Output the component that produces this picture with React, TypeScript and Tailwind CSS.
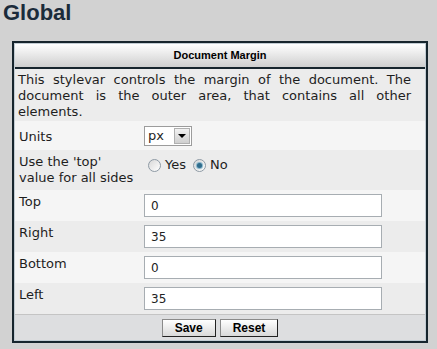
import React from "react";

const ROW_DARK = "bg-[#ececec]";
const ROW_LIGHT = "bg-[#f5f5f5]";

function Radio({ checked }: { checked?: boolean }) {
  return (
    <span className="relative inline-block h-[13px] w-[13px] rounded-full border border-[#8e9aa5] bg-gradient-to-br from-[#d8d8d8] to-white">
      {checked && (
        <span className="absolute left-[3px] top-[3px] h-[5px] w-[5px] rounded-full bg-[#2f6c8c] shadow-[0_0_1px_1px_#7fb0c8]" />
      )}
    </span>
  );
}

function TextRow({ label, value, bg }: { label: string; value: string; bg: string }) {
  return (
    <div className={`flex h-[31px] items-start px-[4px] ${bg}`}>
      <div className="w-[125px] pt-[4px] leading-[16px]">{label}</div>
      <input
        readOnly
        value={value}
        className="mt-[4px] h-[23px] w-[238px] border border-[#a7adb2] bg-white pl-[6px] text-[12px] text-[#222] outline-none"
      />
    </div>
  );
}

function Btn({ children }: { children: React.ReactNode }) {
  return (
    <button
      type="button"
      className="h-[18px] border border-[#8a8a8a] border-b-[#222] border-r-[#222] bg-gradient-to-b from-white to-[#d9d9d9] px-[12px] font-['Liberation_Sans'] text-[12px] font-bold leading-[14px] text-black"
    >
      {children}
    </button>
  );
}

export default function App() {
  return (
    <div className="min-h-screen bg-[#d2d2d2] font-['DejaVu_Sans',sans-serif] text-[13px] text-[#1e1e1e]">
      <h1 className="pl-[3px] font-['Liberation_Sans',sans-serif] text-[22px] font-bold leading-[26px] text-[#1b2b3a]">
        Global
      </h1>

      <div className="ml-[12px] mt-[15px] w-[416px] border-2 border-[#17252d]">
        <div className="border border-[#c2ccd3]">
          <div className="flex h-[25px] items-center justify-center border-b-2 border-[#17252d] bg-gradient-to-b from-white to-[#cfcfcf] font-['Liberation_Sans',sans-serif] text-[11px] font-bold text-black">
            Document Margin
          </div>

          <div className={`pl-[3px] pr-[14px] pt-[3px] pb-[1px] text-justify leading-[16px] ${ROW_DARK}`}>
            This stylevar controls the margin of the document. The document is the outer area, that contains all other elements.
          </div>

          <div className={`flex h-[29px] items-center px-[4px] ${ROW_LIGHT}`}>
            <div className="w-[125px] pt-[2px]">Units</div>
            <div className="mt-[1px] flex h-[20px] w-[48px] items-center border border-[#9c9c9c] bg-white">
              <span className="flex-1 pl-[3px] leading-[16px]">px</span>
              <span className="mr-[1px] flex h-[16px] w-[16px] items-center justify-center border border-[#b0b0b0] bg-gradient-to-b from-[#f2f2f2] to-[#cfcfcf]">
                <span className="h-0 w-0 border-x-[4px] border-t-[4px] border-x-transparent border-t-black" />
              </span>
            </div>
          </div>

          <div className={`flex h-[40px] items-start px-[4px] ${ROW_DARK}`}>
            <div className="w-[125px] pt-[4px] leading-[16px]">
              Use the 'top'
              <br />
              value for all sides
            </div>
            <div className="flex items-center gap-[4px] pl-[4px] pt-[7px] leading-[16px]">
              <Radio />
              <span>Yes</span>
              <span className="ml-[3px] flex">
                <Radio checked />
              </span>
              <span>No</span>
            </div>
          </div>

          <TextRow label="Top" value="0" bg={ROW_LIGHT} />
          <TextRow label="Right" value="35" bg={ROW_DARK} />
          <TextRow label="Bottom" value="0" bg={ROW_LIGHT} />
          <TextRow label="Left" value="35" bg={ROW_DARK} />

          <div className="flex h-[26px] items-start justify-center gap-[4px] border-t border-[#c4c4c4] bg-[#dddee0] pt-[4px]">
            <Btn>Save</Btn>
            <Btn>Reset</Btn>
          </div>
        </div>
      </div>
    </div>
  );
}
